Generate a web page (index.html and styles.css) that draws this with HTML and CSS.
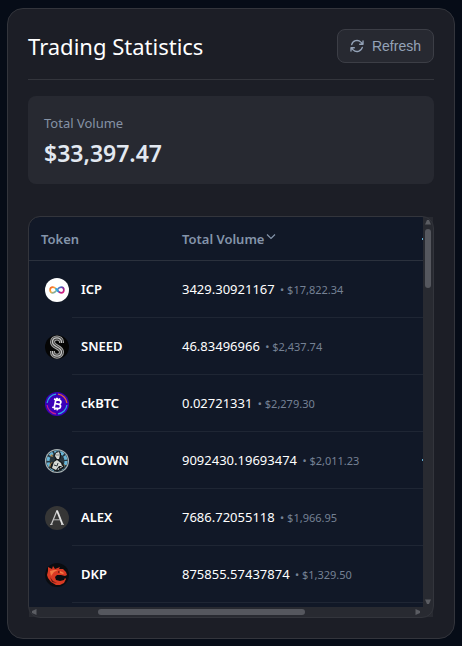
FILE: index.html
```html
<!DOCTYPE html>
<html lang="en">
<head>
    <meta charset="UTF-8">
    <meta name="viewport" content="width=device-width, initial-scale=1.0">
    <title>Trading Statistics</title>
    <link rel="stylesheet" href="styles.css">
</head>
<body>
<main class="card">
    <header class="card-header">
        <h1>Trading Statistics</h1>
        <button class="refresh" type="button">
            <svg width="16" height="16" viewBox="0 0 24 24" fill="none" stroke="currentColor" stroke-width="2" stroke-linecap="round" stroke-linejoin="round">
                <path d="M16.02 9.35h5V4.36M2.98 19.64v-5h5M2.98 14.65l3.18 3.18a8.25 8.25 0 0 0 13.8-3.7M4.03 9.86a8.25 8.25 0 0 1 13.8-3.7l3.19 3.19"/>
            </svg>
            Refresh
        </button>
    </header>

    <section class="summary">
        <p class="summary-label">Total Volume</p>
        <p class="summary-value">$33,397.47</p>
    </section>

    <div class="table-box">
        <div class="viewport">
            <table>
                <colgroup>
                    <col class="col-logo">
                    <col class="col-name">
                    <col>
                    <col class="col-next">
                </colgroup>
                <thead>
                    <tr>
                        <th class="token" colspan="2">Token</th>
                        <th>
                            <span class="sort">Total Volume<svg width="10" height="10" viewBox="0 0 10 10" fill="none" stroke="currentColor" stroke-width="1.2"><path d="M1 2.5l4 4 4-4"/></svg></span>
                        </th>
                        <th class="peek"></th>
                    </tr>
                </thead>
                <tbody>
                    <tr>
                        <td class="logo">
                            <svg width="24" height="24" viewBox="0 0 24 24">
                                <defs>
                                    <linearGradient id="icp-left" x1="0" y1="0" x2="1" y2="1"><stop offset="0" stop-color="#f15a24"/><stop offset=".45" stop-color="#fbb03b"/><stop offset="1" stop-color="#29abe2"/></linearGradient>
                                    <linearGradient id="icp-right" x1="0" y1="0" x2="1" y2="1"><stop offset="0" stop-color="#29abe2"/><stop offset=".5" stop-color="#7b2d9b"/><stop offset="1" stop-color="#ed1e79"/></linearGradient>
                                </defs>
                                <circle cx="12" cy="12" r="12" fill="#fff"/>
                                <path d="M12 12c-1.600-2-2.700-2.800-4.100-2.800a2.800 2.800 0 0 0 0 5.600c1.400 0 2.500-.8 4.100-2.800" fill="none" stroke="url(#icp-left)" stroke-width="1.700"/>
                                <path d="M12 12c1.600-2 2.700-2.800 4.100-2.800a2.800 2.800 0 0 1 0 5.600c-1.400 0-2.500-.8-4.100-2.800" fill="none" stroke="url(#icp-right)" stroke-width="1.700"/>
                                <path d="M10.5 10.3L13.5 13.6" stroke="#29abe2" stroke-width="1.7"/>
                            </svg>
                        </td>
                        <td class="name">ICP</td>
                        <td>3429.30921167 <span class="usd">• $17,822.34</span></td>
                        <td></td>
                    </tr>
                    <tr>
                        <td class="logo">
                            <svg width="24" height="24" viewBox="0 0 24 24" fill="none">
                                <circle cx="12" cy="12" r="12" fill="#050505"/>
                                <path d="M16.500 8V7c0-5.500-9-5.500-9 0s9 4.500 9 10-9 5.500-9 0v-1" stroke="#a5a5a5" stroke-width="5"/>
                                <path d="M16.500 8V7c0-5.500-9-5.500-9 0s9 4.500 9 10-9 5.500-9 0v-1" stroke="#333" stroke-width="3"/>
                                <path d="M16.500 8V7c0-5.500-9-5.500-9 0s9 4.500 9 10-9 5.500-9 0v-1" stroke="#c4c4c4" stroke-width="1.300"/>
                            </svg>
                        </td>
                        <td class="name">SNEED</td>
                        <td>46.83496966 <span class="usd">• $2,437.74</span></td>
                        <td></td>
                    </tr>
                    <tr>
                        <td class="logo">
                            <svg width="24" height="24" viewBox="0 0 24 24" fill="none">
                                <circle cx="12" cy="12" r="12" fill="#3b00b9"/>
                                <path d="M13 2.100a10 10 0 0 1 8.900 8.900" stroke="#e0692e" stroke-width="1.200"/>
                                <path d="M21.900 13a10 10 0 0 1-8.900 8.900" stroke="#29abe2" stroke-width="1.200"/>
                                <path d="M11 21.900A10 10 0 0 1 2.100 13" stroke="#c01f8d" stroke-width="1.200"/>
                                <path d="M2.100 11A10 10 0 0 1 11 2.100" stroke="#29abe2" stroke-width="1.200"/>
                                <g transform="rotate(12 12 12)" stroke="#fff" stroke-width="1.700">
                                    <path d="M8 7.800h5.200c3 0 3 4.100 0 4.100H10h3.600c3.200 0 3.200 4.300 0 4.300H8M10 7.800v8.400M11 5.800v2M13.300 5.800v2M11 16.200v2M13.300 16.200v2"/>
                                </g>
                            </svg>
                        </td>
                        <td class="name">ckBTC</td>
                        <td>0.02721331 <span class="usd">• $2,279.30</span></td>
                        <td></td>
                    </tr>
                    <tr>
                        <td class="logo">
                            <svg width="24" height="24" viewBox="0 0 24 24">
                                <circle cx="12" cy="12" r="12" fill="#a9b2b4"/>
                                <circle cx="12" cy="12" r="10.800" fill="#27363f"/>
                                <circle cx="12" cy="12" r="9" fill="none" stroke="#68b4d6" stroke-width="3" stroke-dasharray="4 1.650"/>
                                <path d="M4 16l3-3 2 2-3 5zM16 14l4 2-3 4zM5 7l2-2 1 3z" fill="#b58a4a"/>
                                <path d="M9 5l3-3 4 2 0 5-2 2 4 3 2 5-8 4-7-4 1-4 4-4z" fill="#161a1d"/>
                                <path d="M11 4l3-1 1 3-1 4-2 0-2-3zM9 13l3-2 4 3 1 3-3 0-3 4-4-2z" fill="#d5d8d4"/>
                                <path d="M11.500 6h1M13.500 6h1M9 16l3 1 1-3" stroke="#30383c" fill="none"/>
                                <path d="M15 19l3-2M13 21l1-2" stroke="#c3c8c8" fill="none"/>
                            </svg>
                        </td>
                        <td class="name">CLOWN</td>
                        <td>9092430.19693474 <span class="usd">• $2,011.23</span></td>
                        <td class="peek"></td>
                    </tr>
                    <tr>
                        <td class="logo">
                            <svg width="24" height="24" viewBox="0 0 24 24" fill="none">
                                <circle cx="12" cy="12" r="12" fill="#363636"/>
                                <path d="M6.300 18.500L12 4.500" stroke="#c8c8c8" stroke-width="1.200"/>
                                <path d="M12 4.500L17.500 18.500" stroke="#e4e4e4" stroke-width="1.900"/>
                                <path d="M8.500 13.800h7M5 18.400h2.600M16 18.400h3" stroke="#c8c8c8" stroke-width=".900"/>
                            </svg>
                        </td>
                        <td class="name">ALEX</td>
                        <td>7686.72055118 <span class="usd">• $1,966.95</span></td>
                        <td></td>
                    </tr>
                    <tr>
                        <td class="logo">
                            <svg width="24" height="24" viewBox="0 0 24 24" fill="none">
                                <circle cx="12" cy="12" r="12" fill="#0a0c10"/>
                                <path d="M3 4l4 2 1-3 2 3 5-2-1 2 4 0 3 3 1 3-2 1-4-1-4 0-2 2 1 3 4 1 4-1 1-2 1 1-2 4-4 2h-4l-5-3-3-4-1-3 1-4z" fill="#d93a23"/>
                                <path d="M5 8l4-1 4 0-4 2-3 4zM15 8l4 2-1 1-3-1z" fill="#f47a45"/>
                                <path d="M13 8l2 1-2 1zM5 14l3 4 4 2-5-1z" fill="#601712"/>
                            </svg>
                        </td>
                        <td class="name">DKP</td>
                        <td>875855.57437874 <span class="usd">• $1,329.50</span></td>
                        <td></td>
                    </tr>
                </tbody>
            </table>
        </div>
        <div class="bar bar-y">
            <svg width="6" height="6" viewBox="0 0 6 6"><path d="M0 5.500l2-4.500h2l2 4.500z"/></svg>
            <span class="thumb"></span>
            <svg width="6" height="6" viewBox="0 0 6 6"><path d="M0 .5l2 4.500h2l2-4.500z"/></svg>
        </div>
        <div class="bar bar-x">
            <svg width="6" height="6" viewBox="0 0 6 6"><path d="M5.500 0L1 2v2l4.500 2z"/></svg>
            <span class="thumb"></span>
            <svg width="6" height="6" viewBox="0 0 6 6"><path d="M.5 0L5 2v2L.5 6z"/></svg>
        </div>
        <div class="bar corner"></div>
    </div>
</main>
</body>
</html>
```
FILE: styles.css
```css
* {
  box-sizing: border-box;
}

body {
  margin: 8px 7px 7px;
  font-family: "Noto Sans", "Open Sans", sans-serif;
  font-size: 13px;
  color: #fff;
  background-color: #060c17;
}

h1,
p {
  margin: 0;
}

.card {
  padding: 20px;
  border: 1px solid #33353c;
  border-radius: 16px;
  background-color: #1c1e26;
}

.card-header {
  display: flex;
  align-items: center;
  justify-content: space-between;
  padding-bottom: 16px;
  margin-bottom: 16px;
  border-bottom: 1px solid #33353c;
}

h1 {
  font-size: 22px;
  font-weight: 400;
  line-height: 34px;
}

.refresh {
  display: flex;
  align-items: center;
  gap: 7px;
  height: 34px;
  padding: 0 12px 0 11px;
  border: 1px solid #3c3e46;
  border-radius: 8px;
  font-family: "Liberation Sans", sans-serif;
  font-size: 14px;
  color: #94a3b8;
  background-color: #272931;
  cursor: pointer;
}

.summary {
  padding: 16px;
  margin-bottom: 32px;
  border-radius: 8px;
  background-color: #272931;
}

.summary-label {
  margin-bottom: 4px;
  line-height: 22px;
  color: #8592a5;
}

.summary-value {
  font-size: 23px;
  font-weight: 600;
  line-height: 30px;
  color: #e2e8f0;
}

.table-box {
  position: relative;
  display: grid;
  grid-template-columns: 1fr 10px;
  grid-template-rows: 390px 10px;
  border: 1px solid transparent;
}

/* frame runs over the scrollbars */
.table-box::after {
  content: "";
  position: absolute;
  inset: -1px;
  border: 1px solid #33353c;
  border-radius: 12px;
  pointer-events: none;
}

.viewport {
  overflow: hidden;
  border-top-left-radius: 11px;
  background-color: #111827;
}

table {
  width: 100%;
  table-layout: fixed;
  border-collapse: separate;
  border-spacing: 0;
}

.col-logo {
  width: 43px;
}

.col-name {
  width: 110px;
}

.col-next {
  width: 1px;
}

th,
td {
  padding: 0;
  text-align: left;
  white-space: nowrap;
}

th {
  height: 44px;
  border-bottom: 1px solid #2b313d;
  font-weight: 600;
  color: #8494aa;
}

td {
  height: 57px;
  border-bottom: 1px solid #1f2634;
}

.token {
  padding-left: 12px;
}

.sort {
  display: flex;
  align-items: center;
  gap: 2px;
}

.sort svg {
  margin-bottom: 4px;
}

.logo {
  padding-left: 16px;
  border-bottom: 0;
}

.logo svg {
  display: block;
}

.name {
  padding-left: 9px;
  font-weight: 600;
}

.usd {
  margin-left: 2px;
  font-size: 11px;
  color: #758194;
}

/* sliver of the column that is scrolled out of view */
.peek {
  background: linear-gradient(#5fa9cd, #5fa9cd) center / 1px 2px no-repeat;
}

.bar {
  display: flex;
  align-items: center;
  justify-content: space-between;
  padding: 2px;
  background-color: #282a31;
}

.bar svg {
  flex: none;
  fill: #5b5d63;
}

.bar-y {
  flex-direction: column;
}

.thumb {
  border-radius: 3px;
  background-color: #55575e;
}

.bar-y .thumb {
  width: 6px;
  height: 59px;
  margin: 4px 0 auto;
}

.bar-x .thumb {
  width: 53%;
  height: 6px;
  margin: 0 auto 0 61px;
}
```
